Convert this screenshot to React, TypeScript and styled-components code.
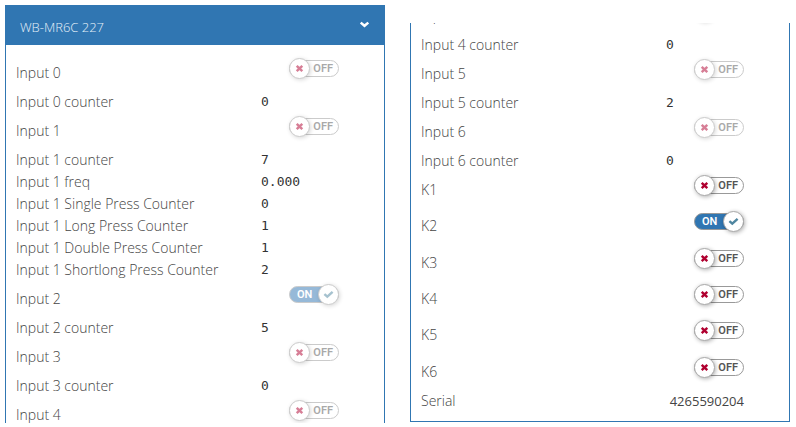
import React, { useId, useState } from "react";
import styled, { createGlobalStyle } from "styled-components";

const GlobalStyle = createGlobalStyle`
  *, *::before, *::after { box-sizing: border-box; }
  body {
    margin: 0;
    background: #fff;
    color: #444;
    font-family: "Open Sans", "Noto Sans", sans-serif;
    font-size: 14px;
    line-height: 22px;
  }
`;

const Page = styled.main`
  display: grid;
  grid-template-columns: 1fr 1fr;
  gap: 25px;
  height: 100vh;
  padding: 5px 6px 4px 5px;
`;

const Column = styled.div<{ $tail?: boolean }>`
  display: flex;
  flex-direction: column;
  justify-content: ${(p) => (p.$tail ? "flex-end" : "flex-start")};
  min-height: 0;
  margin: ${(p) => (p.$tail ? "18px 0 1px" : "0")};
  overflow: hidden;
`;

const Panel = styled.section<{ $tail?: boolean }>`
  flex: none;
  border: 1px solid #3076b2;
  border-top-width: ${(p) => (p.$tail ? "0" : "1px")};
  background: #fff;
`;

const PanelHeader = styled.button`
  display: flex;
  align-items: center;
  justify-content: space-between;
  width: 100%;
  height: 39px;
  padding: 0 14px;
  border: 0;
  background: #3076b2;
  color: #fff;
  font: inherit;
  cursor: pointer;
`;

const PanelTitle = styled.span`
  padding-top: 2px;
  color: #e4eff8;
  font-size: 13px;
  font-weight: 300;
`;

const PanelBody = styled.div`
  padding: 10px 10px 9px;
`;

const OutputGroup = styled.div`
  display: grid;
  grid-auto-rows: 1fr;
  min-height: 218px;
`;

const Row = styled.div<{ $tall?: boolean }>`
  display: grid;
  grid-template-columns: 245px 1fr;
  align-items: center;
  min-height: ${(p) => (p.$tall ? "36px" : "22px")};
`;

const Name = styled.label`
  font-weight: 300;
`;

const Value = styled.output`
  color: #333;
  font-family: "DejaVu Sans Mono", monospace;
  font-size: 13px;
`;

const Serial = styled.output`
  width: 78px;
  font-size: 13px;
  text-align: right;
`;

const Switch = styled.span`
  display: block;
  position: relative;
  align-self: start;
  width: 50px;
  height: 21px;
  margin: 3px 0 0 28px;
`;

const Track = styled.span<{ $on: boolean; $dim: boolean }>`
  display: flex;
  align-items: center;
  justify-content: ${(p) => (p.$on ? "flex-start" : "flex-end")};
  height: 17px;
  margin: 2px 0;
  padding: ${(p) => (p.$on ? "0 0 0 7px" : "0 5px 0 0")};
  border: 1px solid #999;
  border-radius: 9px;
  background: ${(p) => (p.$on ? "#3076b2" : "#fff")};
  color: ${(p) => (p.$on ? "#fff" : "#555")};
  font: 600 11px/15px Roboto, Arial, sans-serif;
  opacity: ${(p) => (p.$dim ? 0.5 : 1)};
`;

const Knob = styled.span<{ $on: boolean; $dim: boolean }>`
  position: absolute;
  top: 0;
  left: ${(p) => (p.$on ? "29px" : "0")};
  display: flex;
  align-items: center;
  justify-content: center;
  width: 21px;
  height: 21px;
  border: 1px solid ${(p) => (p.$dim ? "#ccc" : "#aaa")};
  border-radius: 50%;
  background: #fff;
  box-shadow: 1px 1px 4px ${(p) => (p.$dim ? "rgba(0,0,0,.16)" : "rgba(0,0,0,.32)")};

  svg { opacity: ${(p) => (p.$dim ? 0.5 : 1)}; }
`;

const HiddenCheckbox = styled.input`
  position: absolute;
  inset: 0;
  z-index: 1;
  width: 100%;
  height: 100%;
  margin: 0;
  opacity: 0;
  cursor: pointer;
  &:disabled { cursor: default; }
`;

const CrossIcon = () => (
  <svg width="9" height="9" viewBox="0 0 9 9" aria-hidden="true">
    <path d="M1.7 1.9 7.3 7.1M7.3 1.9 1.7 7.1" stroke="#b00030" strokeWidth="2.5" fill="none" />
  </svg>
);

const CheckIcon = () => (
  <svg width="11" height="9" viewBox="0 0 11 9" aria-hidden="true">
    <path d="M1.4 4.1 4.3 6.7 9.6 1.9" stroke="#4f86a0" strokeWidth="2.4" fill="none" />
  </svg>
);

const ChevronIcon = () => (
  <svg width="11" height="9" viewBox="0 0 11 9" aria-hidden="true">
    <path d="M1.7 1.6 5.5 4.8 9.3 1.6" stroke="#fff" strokeWidth="2.5" fill="none" />
  </svg>
);

type Item = { name: string; value?: string; on?: boolean; enabled?: boolean };

const headItems: Item[] = [
  { name: "Input 0", on: false },
  { name: "Input 0 counter", value: "0" },
  { name: "Input 1", on: false },
  { name: "Input 1 counter", value: "7" },
  { name: "Input 1 freq", value: "0.000" },
  { name: "Input 1 Single Press Counter", value: "0" },
  { name: "Input 1 Long Press Counter", value: "1" },
  { name: "Input 1 Double Press Counter", value: "1" },
  { name: "Input 1 Shortlong Press Counter", value: "2" },
  { name: "Input 2", on: true },
  { name: "Input 2 counter", value: "5" },
  { name: "Input 3", on: false },
  { name: "Input 3 counter", value: "0" },
  { name: "Input 4", on: false },
];

const tailItems: Item[] = [
  { name: "Input 4", on: false },
  { name: "Input 4 counter", value: "0" },
  { name: "Input 5", on: false },
  { name: "Input 5 counter", value: "2" },
  { name: "Input 6", on: false },
  { name: "Input 6 counter", value: "0" },
];

const outputs: Item[] = ["K1", "K2", "K3", "K4", "K5", "K6"].map((name) => ({
  name,
  on: name === "K2",
  enabled: true,
}));

function ItemRow({ item }: { item: Item }) {
  const id = useId();
  const [on, setOn] = useState(!!item.on);
  const dim = !item.enabled;

  if (item.value !== undefined) {
    return (
      <Row>
        <Name htmlFor={id}>{item.name}</Name>
        <Value id={id}>{item.value}</Value>
      </Row>
    );
  }
  return (
    <Row $tall>
      <Name htmlFor={id}>{item.name}</Name>
      <Switch>
        <Track $on={on} $dim={dim}>{on ? "ON" : "OFF"}</Track>
        <Knob $on={on} $dim={dim}>{on ? <CheckIcon /> : <CrossIcon />}</Knob>
        <HiddenCheckbox
          id={id}
          type="checkbox"
          checked={on}
          disabled={dim}
          onChange={(e) => setOn(e.target.checked)}
        />
      </Switch>
    </Row>
  );
}

export default function App() {
  return (
    <>
      <GlobalStyle />
      <Page>
        <Column>
          <Panel>
            <PanelHeader type="button" aria-expanded="true">
              <PanelTitle>WB-MR6C 227</PanelTitle>
              <ChevronIcon />
            </PanelHeader>
            <PanelBody>
              {headItems.map((item) => <ItemRow key={item.name} item={item} />)}
            </PanelBody>
          </Panel>
        </Column>
        <Column $tail>
          <Panel $tail>
            <PanelBody>
              {tailItems.map((item) => <ItemRow key={item.name} item={item} />)}
              <OutputGroup>
                {outputs.map((item) => <ItemRow key={item.name} item={item} />)}
              </OutputGroup>
              <Row>
                <Name htmlFor="serial">Serial</Name>
                <Serial id="serial">4265590204</Serial>
              </Row>
            </PanelBody>
          </Panel>
        </Column>
      </Page>
    </>
  );
}
